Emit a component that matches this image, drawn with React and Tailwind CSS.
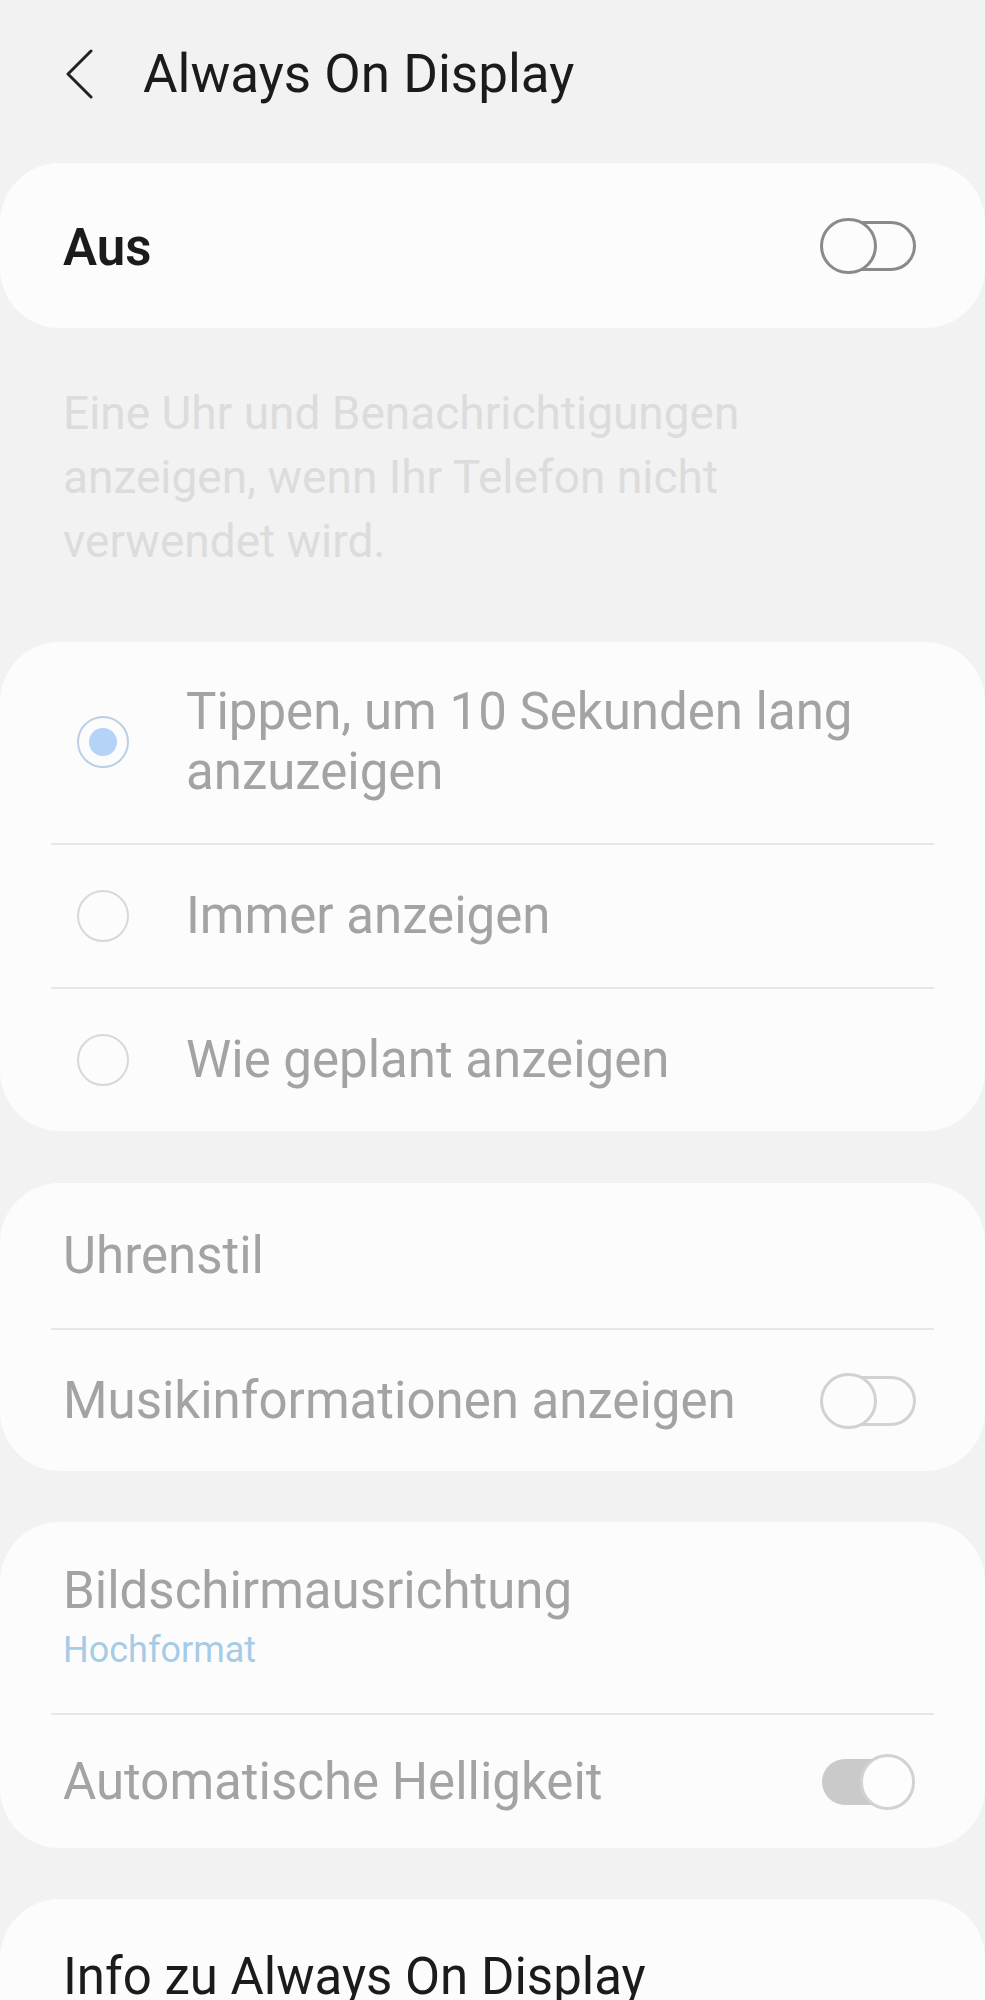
import React, { useState } from 'react';

const font = { fontFamily: 'Roboto, "Noto Sans", sans-serif' };

const Toggle = ({ on = false, dim = false }) => {
  const line = dim ? 'border-[#d2d2d2]' : 'border-[#8a8a8a]';
  if (on) {
    return (
      <div className="relative w-[96px] h-[56px] shrink-0">
        <div className="absolute left-[3px] top-[5px] h-[46px] w-[88px] rounded-full bg-[#cacaca]" />
        <div className="absolute right-0 top-0 w-[55px] h-[56px] rounded-full border-[3px] border-[#d2d2d2] bg-[#fdfdfd]" />
      </div>
    );
  }
  return (
    <div className="relative w-[96px] h-[56px] shrink-0">
      <div className={`absolute right-0 top-[3px] h-[50px] w-[82px] rounded-full border-[3px] ${line}`} />
      <div className={`absolute left-0 top-0 w-[57px] h-[56px] rounded-full border-[3px] ${line} bg-[#fcfcfc]`} />
    </div>
  );
};

const Radio = ({ checked }) => (
  <div
    className={`w-[52px] h-[52px] rounded-full border-2 flex items-center justify-center shrink-0 ${
      checked ? 'border-[#bccfe4]' : 'border-[#d8d8d8]'
    }`}
  >
    {checked && <div className="w-[28px] h-[28px] rounded-full bg-[#b5d3f8]" />}
  </div>
);

const Divider = () => <div className="mx-[51px] h-[2px] bg-[#e7e7e7]" />;

const Card = ({ children, className = '' }) => (
  <div className={`bg-[#fcfcfc] rounded-[60px] ${className}`}>{children}</div>
);

export default function App() {
  const [modus, setModus] = useState(0);
  const optionen = ['Tippen, um 10 Sekunden lang anzuzeigen', 'Immer anzeigen', 'Wie geplant anzeigen'];

  return (
    <div className="w-[985px] h-[2000px] overflow-hidden bg-[#f2f2f2]" style={font}>
      {/* Kopfzeile */}
      <div className="h-[148px] flex items-center pl-[64px]">
        <svg width="32" height="50" viewBox="0 0 32 50" className="shrink-0">
          <polyline points="27,2 4,25 27,48" fill="none" stroke="#222" strokeWidth="3" strokeLinejoin="round" strokeLinecap="round" />
        </svg>
        <h1 className="ml-[47px] text-[53px] leading-[60px] text-[#1b1b1b]">Always On Display</h1>
      </div>

      <div className="mt-[15px]">
        <Card className="h-[165px] flex items-center justify-between pl-[63px] pr-[69px]">
          <span className="text-[51px] leading-[60px] font-semibold text-[#1b1b1b] pt-[4px]">Aus</span>
          <Toggle />
        </Card>
      </div>

      <p className="mt-[53px] pl-[63px] pr-[200px] text-[46px] leading-[64px] text-[#dcdcdc]">
        Eine Uhr und Benachrichtigungen anzeigen, wenn Ihr Telefon nicht verwendet wird.
      </p>

      <Card className="mt-[69px]">
        {optionen.map((o, i) => (
          <div key={o}>
            {i > 0 && <Divider />}
            <div
              onClick={() => setModus(i)}
              className={`flex items-center pl-[77px] pr-[90px] ${i === 0 ? 'h-[201px] pb-[2px]' : 'h-[142px]'}`}
            >
              <Radio checked={modus === i} />
              <span className="ml-[57px] text-[51px] leading-[60px] text-[#a3a3a3]">{o}</span>
            </div>
          </div>
        ))}
      </Card>

      <Card className="mt-[52px]">
        <div className="h-[145px] flex items-center pl-[63px] text-[51px] leading-[60px] text-[#a3a3a3]">Uhrenstil</div>
        <Divider />
        <div className="h-[141px] flex items-center justify-between pl-[63px] pr-[69px]">
          <span className="text-[51px] leading-[60px] text-[#a3a3a3]">Musikinformationen anzeigen</span>
          <Toggle dim />
        </div>
      </Card>

      <Card className="mt-[51px]">
        <div className="h-[191px] flex flex-col justify-center pl-[63px]">
          <span className="text-[51px] leading-[60px] text-[#a3a3a3]">Bildschirmausrichtung</span>
          <span className="text-[36px] leading-[48px] pt-[5px] text-[#a6cbe6]">Hochformat</span>
        </div>
        <Divider />
        <div className="h-[133px] flex items-center justify-between pl-[63px] pr-[70px]">
          <span className="text-[51px] leading-[60px] text-[#a3a3a3]">Automatische Helligkeit</span>
          <Toggle on />
        </div>
      </Card>

      <Card className="mt-[51px] h-[200px] pt-[48px] pl-[63px]">
        <span className="text-[51px] leading-[60px] text-[#1b1b1b]">Info zu Always On Display</span>
      </Card>
    </div>
  );
}
